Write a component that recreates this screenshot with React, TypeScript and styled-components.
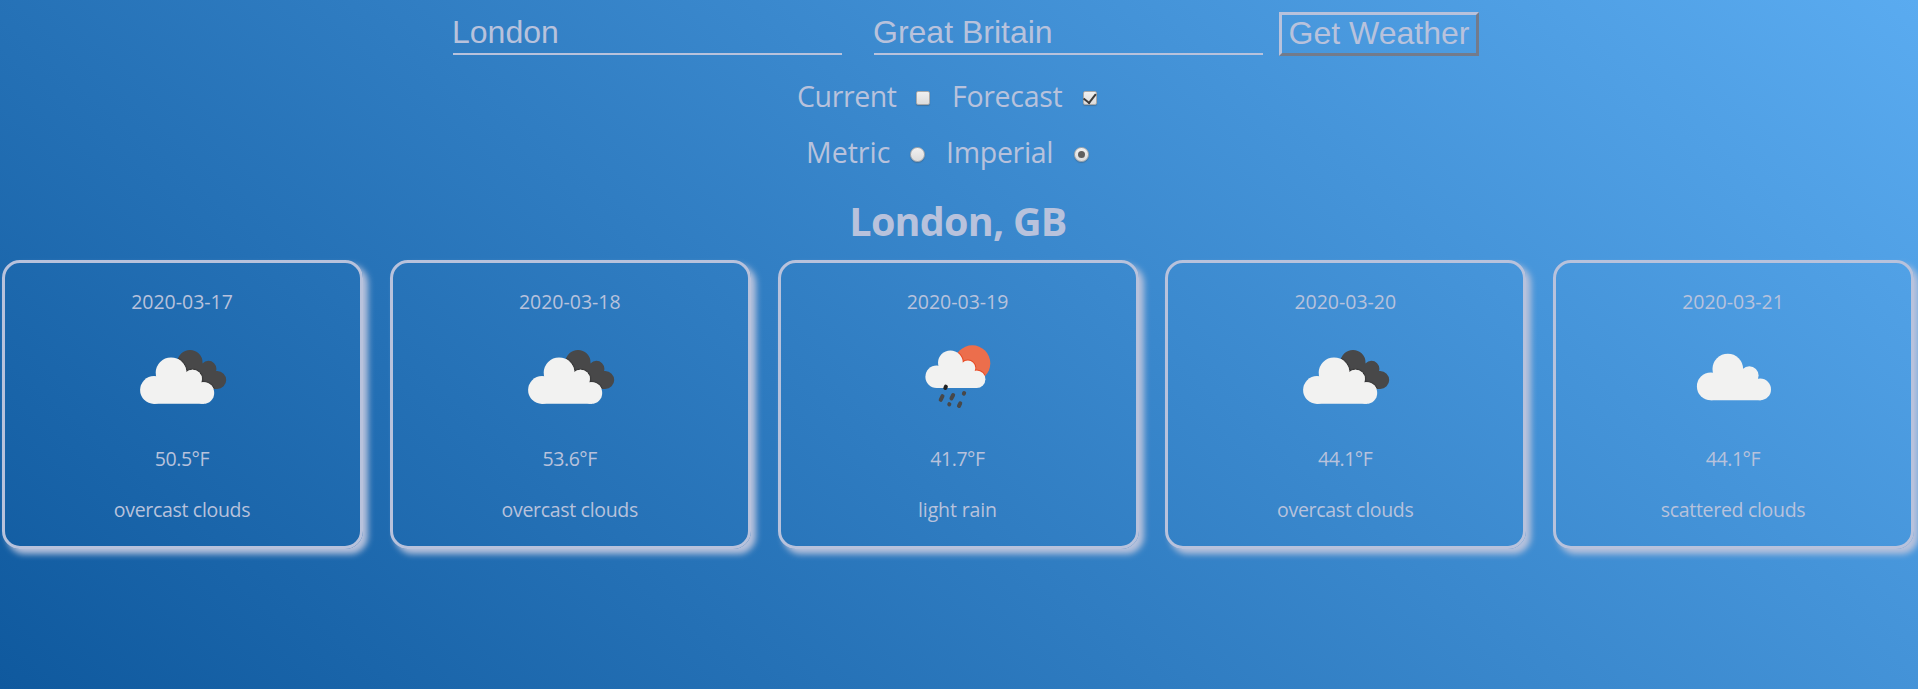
import React from "react";
import styled, { createGlobalStyle, css } from "styled-components";

const ink = "#b8c2dc";

const GlobalStyle = createGlobalStyle`
  * { box-sizing: border-box; }
  html, body { margin: 0; height: 100%; }
  body {
    overflow: hidden;
    color: ${ink};
    font-family: "Segoe UI", "Open Sans", "Noto Sans", sans-serif;
  }
`;

const Page = styled.main`
  height: 689px;
  overflow: hidden;
  display: flex;
  flex-direction: column;
  background: linear-gradient(40deg, #0f599e 0%, #5aabf0 100%);
`;

const SearchBar = styled.form`
  display: flex;
  align-items: flex-start;
  padding: 12px 0 0 453px;
  height: 69px;
`;

const field = css`
  margin: 0;
  background: none;
  color: ${ink};
  font-family: "Liberation Sans", Arial, sans-serif;
  font-size: 32px;
`;

const TextField = styled.input<{ $gap: number }>`
  ${field}
  width: 389px;
  height: 43px;
  margin-right: ${(p) => p.$gap}px;
  padding: 0 0 1px;
  border: 0;
  border-bottom: 2px solid ${ink};
  outline: none;
  text-indent: -1px;
`;

const SubmitButton = styled.button`
  ${field}
  width: 200px;
  height: 44px;
  padding: 0 0 2px;
  line-height: 36px;
  white-space: nowrap;
  border: 3px solid;
  border-color: ${ink} #737b8b #737b8b ${ink};
`;

const OptionRow = styled.div<{ $left: number }>`
  display: flex;
  align-items: center;
  height: 56px;
  padding-left: ${(p) => p.$left}px;
  font-size: 28.5px;
  line-height: 40px;
`;

const OptionLabel = styled.label<{ $width: number; $track?: number }>`
  width: ${(p) => p.$width}px;
  padding-bottom: 3px;
  white-space: nowrap;
  letter-spacing: ${(p) => p.$track ?? -0.3}px;
`;

const toggle = css`
  appearance: none;
  flex: none;
  display: grid;
  place-items: center;
  margin: 2px 0 0;
  border: 1px solid #a9a9a9;
  background: linear-gradient(#f0f0f0, #dcdcdc);
  box-shadow: 0 1px 1px rgba(60, 60, 60, 0.3);
`;

const Checkbox = styled.input.attrs({ type: "checkbox" })<{ $gap: number }>`
  ${toggle}
  width: 14px;
  height: 14px;
  margin-right: ${(p) => p.$gap}px;
  border-radius: 2px;
  &:checked::before {
    content: "";
    width: 5.5px;
    height: 9.5px;
    margin: -3px 1.5px 0 0;
    border: solid #3c3c3c;
    border-width: 0 2.6px 2.6px 0;
    transform: rotate(38deg);
  }
`;

const Radio = styled.input.attrs({ type: "radio" })<{ $gap: number }>`
  ${toggle}
  width: 15px;
  height: 15px;
  margin-right: ${(p) => p.$gap}px;
  border-radius: 50%;
  &:checked::before {
    content: "";
    width: 7px;
    height: 7px;
    border-radius: 50%;
    background: #5f5f5f;
  }
`;

const Place = styled.h1`
  margin: 0;
  height: 79px;
  padding: 13px 2px 0 0;
  text-align: center;
  font-size: 39.5px;
  line-height: 54px;
  font-weight: 700;
  letter-spacing: -0.75px;
`;

const Forecast = styled.section`
  display: grid;
  grid-template-columns: repeat(5, 361px);
  column-gap: 26.75px;
  padding-left: 2px;
`;

const Card = styled.article`
  height: 289px;
  padding: 25px 1px 0 0;
  display: flex;
  flex-direction: column;
  align-items: center;
  border: 3px solid ${ink};
  border-radius: 18px;
  box-shadow: 5px 5px 6px ${ink};
`;

const Line = styled.p<{ $after: number; $track?: number }>`
  margin: 0 0 ${(p) => p.$after}px;
  height: 27px;
  font-size: 19.5px;
  line-height: 27px;
  letter-spacing: ${(p) => p.$track ?? 0}px;
`;

const Picture = styled.svg`
  display: block;
  width: 100px;
  height: 100px;
  margin-bottom: 18px;
`;

type Sky = "overcast" | "scattered" | "rain";

const Cloud = () => (
  <g fill="#f2f2f1">
    <circle cx="14" cy="32.6" r="13.9" />
    <circle cx="31" cy="15.3" r="15.3" />
    <circle cx="52.5" cy="21.7" r="9.3" />
    <circle cx="63.4" cy="35.6" r="10.8" />
    <path d="M14 20 H60 V27 H64 V46.4 H14Z" />
  </g>
);

const drops = [
  [33.6, 71, 1.8],
  [44.3, 69.7, 1.7],
  [56, 66.3, 0.3],
  [41.3, 77.3, 0.1],
  [51.6, 77.7, 1.3],
];

const SkyIcon = ({ sky }: { sky: Sky }) => (
  <Picture viewBox="0 0 100 100">
    <defs>
      <filter id="edge" x="-10%" y="-10%" width="120%" height="120%">
        <feDropShadow dx="0" dy="0" stdDeviation="0.9" floodColor="#000" floodOpacity="0.7" />
      </filter>
      <clipPath id="darkCloud">
        <circle cx="58" cy="35.4" r="12.5" />
        <circle cx="76.4" cy="41.8" r="8" />
        <circle cx="85.2" cy="53" r="9" />
        <path d="M58 38 H78 V50 H85 V62 H58Z" />
      </clipPath>
      <clipPath id="sun">
        <circle cx="64.3" cy="36.3" r="18" />
      </clipPath>
    </defs>
    {sky === "overcast" && (
      <>
        <g clipPath="url(#darkCloud)">
          <path fill="#484849" d="M0 0H100V100H0Z" />
          <g transform="translate(8 30.4)" filter="url(#edge)"><Cloud /></g>
        </g>
        <g transform="translate(8 30.4)"><Cloud /></g>
      </>
    )}
    {sky === "scattered" && <g transform="translate(13.8 26.8)"><Cloud /></g>}
    {sky === "rain" && (
      <>
        <g clipPath="url(#sun)">
          <path fill="#ec6e4c" d="M0 0H100V100H0Z" />
          <g transform="translate(17.3 23.4) scale(.81)" stroke="#e84a24" strokeWidth="2.4"><Cloud /></g>
        </g>
        <g transform="translate(17.3 23.4) scale(.81)"><Cloud /></g>
        <g strokeWidth="4" strokeLinecap="round">
          <path stroke="#222" d="M37.3 61 l.6-1.3" />
          {drops.map(([x, y, h]) => (
            <path key={x} stroke="#484849" d={`M${x - h / 2} ${y + h} L${x + h / 2} ${y - h}`} />
          ))}
        </g>
      </>
    )}
  </Picture>
);

const days: { date: string; sky: Sky; temp: string; text: string; track: number }[] = [
  { date: "2020-03-17", sky: "overcast", temp: "50.5°F", text: "overcast clouds", track: -0.32 },
  { date: "2020-03-18", sky: "overcast", temp: "53.6°F", text: "overcast clouds", track: -0.32 },
  { date: "2020-03-19", sky: "rain", temp: "41.7°F", text: "light rain", track: -0.12 },
  { date: "2020-03-20", sky: "overcast", temp: "44.1°F", text: "overcast clouds", track: -0.32 },
  { date: "2020-03-21", sky: "scattered", temp: "44.1°F", text: "scattered clouds", track: -0.3 },
];

export default function App() {
  return (
    <>
      <GlobalStyle />
      <Page>
        <SearchBar>
          <TextField $gap={32} defaultValue="London" />
          <TextField $gap={16} defaultValue="Great Britain" />
          <SubmitButton type="button">Get Weather</SubmitButton>
        </SearchBar>
        <OptionRow $left={797}>
          <OptionLabel $width={119} $track={-0.4}>Current</OptionLabel>
          <Checkbox $gap={22} />
          <OptionLabel $width={131}>Forecast</OptionLabel>
          <Checkbox $gap={0} defaultChecked />
        </OptionRow>
        <OptionRow $left={806}>
          <OptionLabel $width={104} $track={0}>Metric</OptionLabel>
          <Radio $gap={21} name="units" />
          <OptionLabel $width={128}>Imperial</OptionLabel>
          <Radio $gap={0} name="units" defaultChecked />
        </OptionRow>
        <Place>London, GB</Place>
        <Forecast>
          {days.map((day) => (
            <Card key={day.date}>
              <Line $after={12}>{day.date}</Line>
              <SkyIcon sky={day.sky} />
              <Line $after={24} $track={-0.45}>{day.temp}</Line>
              <Line $after={0} $track={day.track}>{day.text}</Line>
            </Card>
          ))}
        </Forecast>
      </Page>
    </>
  );
}
